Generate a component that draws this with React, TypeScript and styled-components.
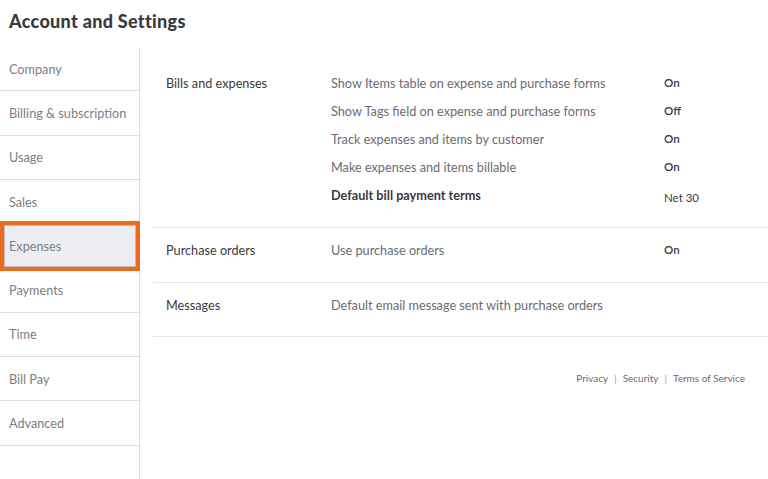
import React from "react";
import styled, { createGlobalStyle } from "styled-components";

const Global = createGlobalStyle`
  html, body { margin: 0; padding: 0; background: #ffffff; }
  body { font-family: "Lato", "Open Sans", sans-serif; color: #393a3d; }
  * { box-sizing: border-box; }
`;

const Page = styled.div`
  width: 768px;
  height: 479px;
  display: flex;
  flex-direction: column;
  overflow: hidden;
`;

const Header = styled.header`
  height: 47px;
  padding: 11px 0 0 9px;
`;

const Title = styled.h1`
  margin: 0;
  font-size: 18px;
  line-height: 21px;
  font-weight: 900;
  color: #393a3d;
  letter-spacing: 0.3px;
`;

const Body = styled.div`
  flex: 1;
  display: flex;
`;

const Sidebar = styled.nav`
  width: 140px;
  border-right: 1px solid #dcdde0;
  display: flex;
  flex-direction: column;
`;

const NavItem = styled.div<{ $active?: boolean }>`
  position: relative;
  height: 44.3px;
  display: flex;
  align-items: center;
  padding-left: 9px;
  font-size: 12.7px;
  color: #7d7e83;
  border-bottom: 1px solid #dcdde0;
  background: ${(p) => (p.$active ? "#eceef1" : "transparent")};
  ${(p) =>
    p.$active &&
    `
    &::after {
      content: "";
      position: absolute;
      left: 0;
      right: -1px;
      top: -3.5px;
      bottom: -3.5px;
      border: 4px solid #f06a1d;
      box-shadow: inset 0 0 0 1px #b9bbbf;
    }
  `}
`;

const Main = styled.main`
  flex: 1;
  padding: 14px 0 0 13px;
  display: flex;
  flex-direction: column;
`;

const Section = styled.section<{ $padBottom: number }>`
  display: grid;
  grid-template-columns: 165px 1fr;
  padding: 8px 0 ${(p) => p.$padBottom}px 13px;
  border-bottom: 1px solid #e3e6ea;
`;

const SectionLabel = styled.div`
  font-size: 12.7px;
  line-height: 28px;
  color: #393a3d;
`;

const Rows = styled.div`
  display: flex;
  flex-direction: column;
`;

const Row = styled.div`
  display: grid;
  grid-template-columns: 333px 1fr;
  min-height: 28px;
  align-items: start;
`;

const SettingName = styled.div<{ $strong?: boolean }>`
  font-size: 12.7px;
  line-height: 28px;
  color: ${(p) => (p.$strong ? "#393a3d" : "#6b6c72")};
  font-weight: ${(p) => (p.$strong ? 700 : 400)};
`;

const SettingValue = styled.div<{ $offset?: number }>`
  font-size: 11.5px;
  line-height: 28px;
  color: #393a3d;
  font-weight: ${(p) => (p.$offset ? 400 : 600)};
  padding-top: ${(p) => p.$offset || 0}px;
`;

const Footer = styled.footer`
  display: flex;
  justify-content: flex-end;
  align-items: center;
  gap: 6px;
  padding: 34px 23px 0 0;
  font-size: 10px;
  line-height: 14px;
  color: #6b6c72;
`;

const Sep = styled.span`
  color: #9a9ba0;
`;

const navItems = [
  "Company",
  "Billing & subscription",
  "Usage",
  "Sales",
  "Expenses",
  "Payments",
  "Time",
  "Bill Pay",
  "Advanced",
];

type Setting = { name: string; value?: string; strong?: boolean; offset?: number };

const sections: { label: string; pad: number; rows: Setting[] }[] = [
  {
    label: "Bills and expenses",
    pad: 15,
    rows: [
      { name: "Show Items table on expense and purchase forms", value: "On" },
      { name: "Show Tags field on expense and purchase forms", value: "Off" },
      { name: "Track expenses and items by customer", value: "On" },
      { name: "Make expenses and items billable", value: "On" },
      { name: "Default bill payment terms", value: "Net 30", strong: true, offset: 3 },
    ],
  },
  {
    label: "Purchase orders",
    pad: 18,
    rows: [{ name: "Use purchase orders", value: "On" }],
  },
  {
    label: "Messages",
    pad: 17,
    rows: [{ name: "Default email message sent with purchase orders" }],
  },
];

export default function App() {
  return (
    <Page>
      <Global />
      <Header>
        <Title>Account and Settings</Title>
      </Header>
      <Body>
        <Sidebar>
          {navItems.map((n) => (
            <NavItem key={n} $active={n === "Expenses"}>
              {n}
            </NavItem>
          ))}
        </Sidebar>
        <Main>
          {sections.map((s) => (
            <Section key={s.label} $padBottom={s.pad}>
              <SectionLabel>{s.label}</SectionLabel>
              <Rows>
                {s.rows.map((r) => (
                  <Row key={r.name}>
                    <SettingName $strong={r.strong}>{r.name}</SettingName>
                    {r.value && <SettingValue $offset={r.offset}>{r.value}</SettingValue>}
                  </Row>
                ))}
              </Rows>
            </Section>
          ))}
          <Footer>
            <span>Privacy</span>
            <Sep>|</Sep>
            <span>Security</span>
            <Sep>|</Sep>
            <span>Terms of Service</span>
          </Footer>
        </Main>
      </Body>
    </Page>
  );
}
